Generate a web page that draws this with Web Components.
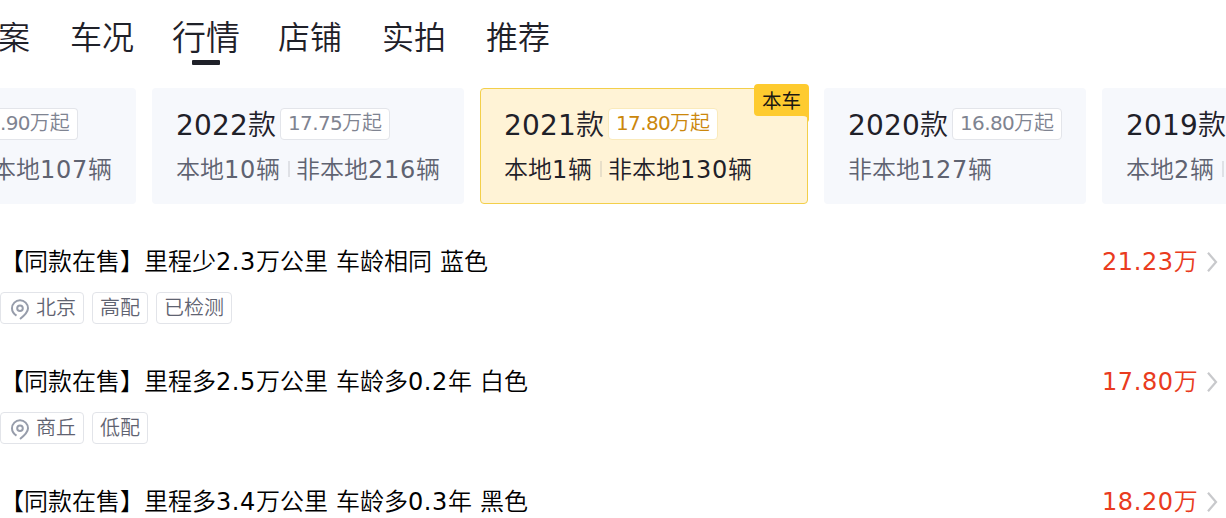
<!DOCTYPE html>
<html lang="zh-CN">
<head>
<meta charset="UTF-8">
<title>行情</title>
<style>
  body {
    margin: 0;
    width: 1226px;
    height: 518px;
    overflow: hidden;
    background: #fff;
    color: #1f2129;
    font-family: "DejaVu Sans", "Noto Sans CJK SC", sans-serif;
  }
</style>
</head>
<body>
<market-page></market-page>

<script>
// wraps latin digits so their weight and spacing can be tuned apart from the hanzi
const conDigitos = (texto) => texto.replace(/[\d.]+/g, (n) => `<span class="num">${n}</span>`);

class NavTabs extends HTMLElement {
  connectedCallback() {
    this.attachShadow({ mode: "open" });
    this.shadowRoot.innerHTML = `
      <style>
        :host {
          display: flex;
          gap: 40px;
          height: 88px;
          margin-left: -2px;
          overflow: hidden;
        }
      </style>
      <slot></slot>
    `;
  }
}

class NavTab extends HTMLElement {
  connectedCallback() {
    this.attachShadow({ mode: "open" });
    this.shadowRoot.innerHTML = `
      <style>
        :host {
          display: flex;
          flex-direction: column;
          align-items: center;
          font-size: 32px;
          line-height: 40px;
          padding-top: 18px;
          white-space: nowrap;
        }
        :host([active]) {
          font-size: 34px;
          margin: 0 -2px;
        }
        .linea {
          display: none;
          width: 28px;
          height: 5px;
          margin-top: 2px;
          border-radius: 1px;
          background: #1f2129;
        }
        :host([active]) .linea {
          display: block;
        }
      </style>
      <slot></slot>
      <div class="linea"></div>
    `;
  }
}

class YearCard extends HTMLElement {
  connectedCallback() {
    const year = this.getAttribute("year");
    const price = this.getAttribute("price");
    const counts = this.getAttribute("counts").split("|");
    this.attachShadow({ mode: "open" });
    this.shadowRoot.innerHTML = `
      <style>
        :host {
          display: block;
          position: relative;
          flex: none;
          box-sizing: border-box;
          height: 116px;
          padding: 20px 24px 0;
          border-radius: 4px;
          background: #f6f8fc;
          white-space: nowrap;
        }
        :host([cut]) {
          padding-left: 0;
          border-radius: 0 4px 4px 0;
        }
        :host([active]) {
          width: 328px;
          padding: 19px 23px 0;
          border: 1px solid #f3cf4a;
          background: #fff3d6;
        }
        .num { font-weight: 400; }
        .arriba {
          display: flex;
          align-items: center;
          height: 32px;
        }
        .year {
          font-size: 28px;
          line-height: 32px;
          margin: 3px 4px 0 0;
        }
        .year .num { letter-spacing: 0.19px; }
        .precio {
          box-sizing: border-box;
          height: 32px;
          padding: 0 7px;
          border: 1px solid #e3e5ea;
          border-radius: 4px;
          background: #fff;
          color: #7f8491;
          font-size: 20px;
          line-height: 29px;
        }
        .precio .num { letter-spacing: -0.65px; }
        :host([cut]) .precio {
          padding-left: 0;
          border-left: none;
          border-radius: 0 4px 4px 0;
        }
        :host([active]) .precio {
          border-color: #faeabb;
          color: #cb870c;
        }
        .abajo {
          display: flex;
          align-items: center;
          margin-top: 14px;
          font-size: 24px;
          line-height: 32px;
          color: #5f6371;
        }
        .abajo .num { letter-spacing: 0.73px; }
        :host([cut]) .abajo { margin-left: -8px; }
        :host([active]) .abajo { color: #1f2129; }
        .sep {
          width: 2px;
          height: 16px;
          margin: 0 6px 3px 8px;
          background: #dfe1e6;
        }
        :host([active]) .sep { background: #e8dfc9; }
        .badge {
          position: absolute;
          top: -5px;
          right: -2px;
          width: 55px;
          height: 38px;
        }
        .badge svg {
          position: absolute;
          left: 0;
          top: 0;
        }
        .badge span {
          position: relative;
          display: block;
          text-align: center;
          font-size: 19.5px;
          font-weight: 400;
          line-height: 35px;
          color: #1b1813;
        }
      </style>
      <div class="arriba">
        ${year ? `<div class="year">${conDigitos(year)}</div>` : ""}
        ${price ? `<div class="precio">${conDigitos(price)}</div>` : ""}
      </div>
      <div class="abajo">
        ${counts.map((c) => `<div>${conDigitos(c)}</div>`).join(`<div class="sep"></div>`)}
      </div>
      ${this.hasAttribute("active") ? `
        <div class="badge">
          <svg width="55" height="38" viewBox="0 0 55 38">
            <path fill="#fecb2f" d="M4 0H51Q55 0 55 4V38L54 36Q53.500 32 49 32H4Q0 32 0 28V4Q0 0 4 0Z"/>
          </svg>
          <span>本车</span>
        </div>` : ""}
    `;
  }
}

class TagChip extends HTMLElement {
  connectedCallback() {
    this.attachShadow({ mode: "open" });
    this.shadowRoot.innerHTML = `
      <style>
        :host {
          display: flex;
          align-items: center;
          box-sizing: border-box;
          height: 32px;
          padding: 0 7px;
          border: 1px solid #e2e4e9;
          border-radius: 4px;
          color: #5f6371;
          font-size: 20px;
          line-height: 28px;
        }
        svg {
          margin: 3px 4px 0 0;
        }
        .texto { margin-bottom: 1px; }
      </style>
      ${this.hasAttribute("pin") ? `
        <svg width="24" height="24" viewBox="0 0 24 24" fill="none" stroke="#979dab" stroke-width="2">
          <path d="M8.500 17.700C5.600 15.800 4 13.300 4 10.300A8 8 0 0 1 20 10.300C20 14.300 16.500 17.500 12 21"/>
          <circle cx="12" cy="10.300" r="2.800"/>
        </svg>` : ""}
      <div class="texto"><slot></slot></div>
    `;
  }
}

class CarRow extends HTMLElement {
  connectedCallback() {
    this.attachShadow({ mode: "open" });
    this.shadowRoot.innerHTML = `
      <style>
        :host {
          display: block;
          height: 120px;
          white-space: nowrap;
        }
        .fila {
          display: flex;
          align-items: center;
          height: 36px;
          font-size: 24px;
          line-height: 36px;
          color: #000;
        }
        .num {
          font-weight: 400;
          letter-spacing: 0.6px;
        }
        .titulo {
          flex: 1;
          word-spacing: 0.37px;
        }
        .precio {
          width: 96px;
          color: #e93b20;
        }
        svg { margin: 0 8px 0 8px; }
        .tags {
          display: flex;
          gap: 8px;
          margin-top: 12px;
        }
      </style>
      <div class="fila">
        <div class="titulo">${conDigitos(this.getAttribute("name"))}</div>
        <div class="precio">${conDigitos(this.getAttribute("price"))}</div>
        <svg width="12" height="22" viewBox="0 0 12 22" fill="none" stroke="#c8c9cc" stroke-width="2.200">
          <path d="M2 1.800L10 11L2 20.200"/>
        </svg>
      </div>
      <div class="tags"><slot></slot></div>
    `;
  }
}

class MarketPage extends HTMLElement {
  connectedCallback() {
    this.attachShadow({ mode: "open" });
    this.shadowRoot.innerHTML = `
      <style>
        :host {
          display: block;
          width: 1226px;
          height: 518px;
          overflow: hidden;
          font-weight: 350;
        }
        .years {
          display: flex;
          gap: 16px;
          height: 156px;
        }
      </style>
      <nav-tabs>
        <nav-tab>案</nav-tab>
        <nav-tab>车况</nav-tab>
        <nav-tab active>行情</nav-tab>
        <nav-tab>店铺</nav-tab>
        <nav-tab>实拍</nav-tab>
        <nav-tab>推荐</nav-tab>
      </nav-tabs>
      <div class="years">
        <year-card cut price=".90万起" counts="本地107辆"></year-card>
        <year-card year="2022款" price="17.75万起" counts="本地10辆|非本地216辆"></year-card>
        <year-card active year="2021款" price="17.80万起" counts="本地1辆|非本地130辆"></year-card>
        <year-card year="2020款" price="16.80万起" counts="非本地127辆"></year-card>
        <year-card year="2019款" counts="本地2辆|"></year-card>
      </div>
      <car-row name="【同款在售】里程少2.3万公里 车龄相同 蓝色" price="21.23万">
        <tag-chip pin>北京</tag-chip>
        <tag-chip>高配</tag-chip>
        <tag-chip>已检测</tag-chip>
      </car-row>
      <car-row name="【同款在售】里程多2.5万公里 车龄多0.2年 白色" price="17.80万">
        <tag-chip pin>商丘</tag-chip>
        <tag-chip>低配</tag-chip>
      </car-row>
      <car-row name="【同款在售】里程多3.4万公里 车龄多0.3年 黑色" price="18.20万"></car-row>
    `;
  }
}

customElements.define("nav-tabs", NavTabs);
customElements.define("nav-tab", NavTab);
customElements.define("year-card", YearCard);
customElements.define("tag-chip", TagChip);
customElements.define("car-row", CarRow);
customElements.define("market-page", MarketPage);
</script>
</body>
</html>
